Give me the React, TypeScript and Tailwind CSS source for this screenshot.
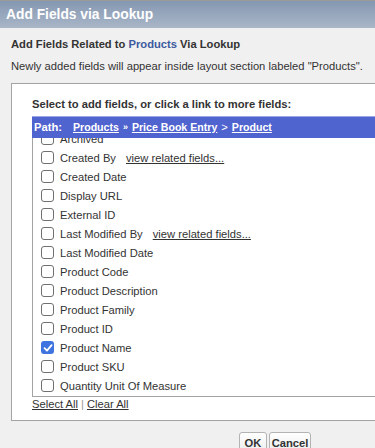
import React from "react";

const items: { label: string; link?: boolean; checked?: boolean }[] = [
  { label: "Archived" },
  { label: "Created By", link: true },
  { label: "Created Date" },
  { label: "Display URL" },
  { label: "External ID" },
  { label: "Last Modified By", link: true },
  { label: "Last Modified Date" },
  { label: "Product Code" },
  { label: "Product Description" },
  { label: "Product Family" },
  { label: "Product ID" },
  { label: "Product Name", checked: true },
  { label: "Product SKU" },
  { label: "Quantity Unit Of Measure" },
];

function Box({ checked }: { checked?: boolean }) {
  if (checked) {
    return (
      <span className="w-[13px] h-[13px] rounded-[3px] bg-[#3f73e0] flex items-center justify-center shrink-0 mt-[-2px]">
        <svg width="10" height="10" viewBox="0 0 10 10">
          <path d="M1.5 5.2 L4 7.6 L8.6 2.2" stroke="#fff" strokeWidth="1.8" fill="none" strokeLinecap="round" strokeLinejoin="round" />
        </svg>
      </span>
    );
  }
  return <span className="w-[13px] h-[13px] rounded-[3px] border border-[#707070] bg-white shrink-0 mt-[-2px]" />;
}

export default function App() {
  return (
    <div
      className="w-[375px] h-[448px] overflow-hidden bg-[#f0f0f0] text-[#333] text-[11.2px]"
      style={{ fontFamily: '"Liberation Sans", Arial, sans-serif' }}
    >
      <div className="h-[28px] border-t border-[#9a9a9a] bg-gradient-to-b from-[#8598b2] to-[#a9b6c7] pl-[6px] flex items-center">
        <span className="text-white font-bold text-[13.8px] leading-none">Add Fields via Lookup</span>
      </div>
      <div className="pl-[11px] mt-[8px] h-[16px] leading-[16px] font-bold">
        Add Fields Related to <span className="text-[#3d5a9e]">Products</span> Via Lookup
      </div>
      <div className="pl-[11px] mt-[6px] h-[16px] leading-[16px] whitespace-nowrap">
        Newly added fields will appear inside layout section labeled "Products".
      </div>
      <div className="ml-[11px] mr-[-20px] mt-[9px] h-[338px] border border-[#a3a3a3] bg-white pl-[20px]">
        <div className="mt-[12px] h-[16px] leading-[16px] font-bold">
          Select to add fields, or click a link to more fields:
        </div>
        <div className="relative z-10 mt-[4px] h-[22px] bg-[#5064cf] border-t border-[#9aa6e6] flex items-center pl-[2px] text-white font-bold whitespace-nowrap">
          <span>Path:</span>
          <span className="ml-[11px] underline text-[10.6px]">Products</span>
          <span className="ml-[4px] text-[9px]">»</span>
          <span className="ml-[4px] underline text-[10.6px]">Price Book Entry</span>
          <span className="ml-[4px] font-normal">&gt;</span>
          <span className="ml-[4px] underline text-[10.6px]">Product</span>
        </div>
        <div className="h-[259px] overflow-hidden border-l border-b border-[#a3a3a3]">
          <div className="mt-[-8px]">
            {items.map((it) => (
              <div key={it.label} className="h-[19px] flex items-center pl-[8px] whitespace-nowrap">
                <Box checked={it.checked} />
                <span className="ml-[6px] leading-[19px]">{it.label}</span>
                {it.link && <span className="ml-[10px] underline">view related fields...</span>}
              </div>
            ))}
          </div>
        </div>
        <div className="h-[14px] leading-[14px] mt-[0px]">
          <span className="underline">Select All</span>
          <span className="mx-[3px] text-[#999]">|</span>
          <span className="underline">Clear All</span>
        </div>
      </div>
      <div className="flex pl-[239px] gap-[2px] mt-[11px]">
        <div className="h-[22px] w-[28px] border border-[#b3b3b3] rounded-[3px] bg-gradient-to-b from-white to-[#ececec] font-bold flex items-center justify-center">
          OK
        </div>
        <div className="h-[22px] w-[42px] border border-[#b3b3b3] rounded-[3px] bg-gradient-to-b from-white to-[#ececec] font-bold flex items-center justify-center">
          Cancel
        </div>
      </div>
    </div>
  );
}
